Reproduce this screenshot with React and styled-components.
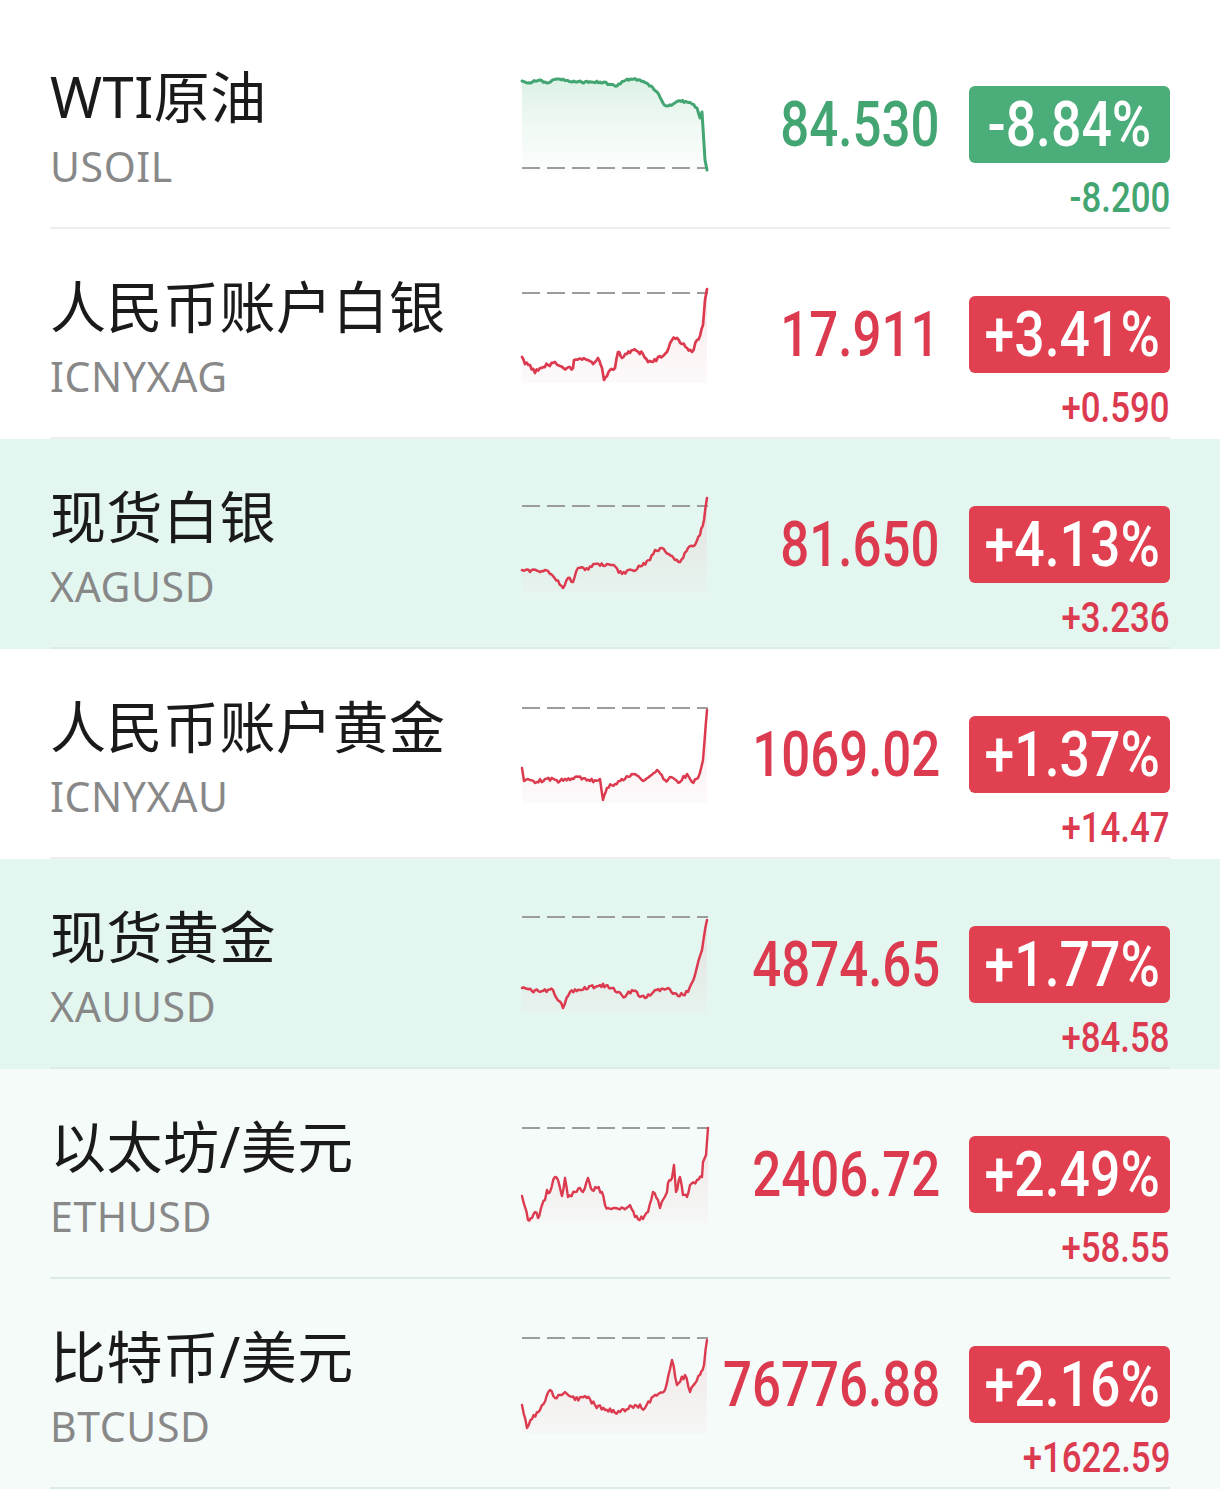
import React from 'react';
import styled, { createGlobalStyle } from 'styled-components';

const GlobalStyle = createGlobalStyle`
  html, body {
    margin: 0;
    padding: 0;
    background: #ffffff;
  }
  #root {
    min-height: 1497px;
  }
`;

const UP = '#dc3a4f';
const DOWN = '#43a572';
const UP_BADGE = '#e0404f';
const DOWN_BADGE = '#4aad7a';
const NUM_FONT = `Roboto, "Liberation Sans", sans-serif`;

const List = styled.div`
  padding: 19px 0 8px;
  background: #ffffff;
`;

const backgrounds = {
  white: '#ffffff',
  mint: '#e3f7f0',
  faint: '#f5fbf9',
};

const Row = styled.div`
  position: relative;
  height: 210px;
  box-sizing: border-box;
  padding: 0 50px;
  display: flex;
  background: ${p => backgrounds[p.$bg]};

  &::after {
    content: '';
    position: absolute;
    left: 50px;
    right: 50px;
    bottom: 0;
    height: 2px;
    background: ${p => (p.$bg === 'white' ? '#eeeeee' : '#dcebe5')};
  }
`;

const NameCol = styled.div`
  width: 470px;
  flex-shrink: 0;
  padding-top: 45px;
  display: flex;
  flex-direction: column;
  gap: 14px;
`;

const Name = styled.div`
  font-family: "Noto Sans", "Noto Sans CJK SC", sans-serif;
  font-size: 56px;
  letter-spacing: 0.5px;
  line-height: 64px;
  color: #1a1a1a;
  white-space: nowrap;
`;

const Code = styled.div`
  font-family: "Noto Sans", sans-serif;
  font-size: 41px;
  letter-spacing: 0.6px;
  line-height: 48px;
  color: #888888;
`;

const ChartBox = styled.div`
  width: 192px;
  flex-shrink: 0;
  padding-top: 50px;
`;

const Quote = styled.div`
  flex: 1;
  min-width: 0;
  padding-top: 67px;
  display: flex;
  flex-direction: column;
  align-items: flex-end;
  gap: 12px;
`;

const QuoteTop = styled.div`
  display: flex;
  align-items: center;
  gap: 29px;
`;

const Price = styled.div`
  font-family: ${NUM_FONT};
  font-weight: 500;
  font-size: 63px;
  line-height: 77px;
  color: ${p => (p.$up ? UP : DOWN)};
  white-space: nowrap;
`;

const Badge = styled.div`
  width: 201px;
  height: 77px;
  border-radius: 6px;
  background: ${p => (p.$up ? UP_BADGE : DOWN_BADGE)};
  color: #ffffff;
  font-family: ${NUM_FONT};
  font-weight: 500;
  font-size: 63px;
  line-height: 77px;
  text-align: center;
  white-space: nowrap;
  overflow: hidden;
`;

const Change = styled.div`
  font-family: ${NUM_FONT};
  font-weight: 500;
  font-size: 43px;
  line-height: 44px;
  color: ${p => (p.$up ? UP : DOWN)};
  white-space: nowrap;
`;

// the numerals in the reference are a condensed DIN face; squeeze Roboto to match
const Narrow = styled.span`
  display: inline-block;
  transform: scaleX(${p => p.$scale || 0.81});
  transform-origin: ${p => p.$origin || 'right'} center;
`;

function rng(seed) {
  let a = seed;
  return () => {
    a |= 0;
    a = (a + 0x6d2b79f5) | 0;
    let t = Math.imul(a ^ (a >>> 15), 1 | a);
    t = (t + Math.imul(t ^ (t >>> 7), 61 | t)) ^ t;
    return ((t ^ (t >>> 14)) >>> 0) / 4294967296;
  };
}

function linePoints(keys, seed, amp) {
  const rand = rng(seed);
  const pts = [];
  for (let i = 0; i < keys.length - 1; i++) {
    const [x1, y1] = keys[i];
    const [x2, y2] = keys[i + 1];
    const steps = Math.max(1, Math.round((x2 - x1) / 1.6));
    for (let s = 0; s < steps; s++) {
      const t = s / steps;
      const jitter = s === 0 ? 0 : (rand() - 0.5) * amp;
      pts.push([x1 + (x2 - x1) * t, y1 + (y2 - y1) * t + jitter]);
    }
  }
  pts.push(keys[keys.length - 1]);
  return pts;
}

const Sparkline = ({ keys, dash, up, seed, amp, width }) => {
  const pts = linePoints(keys, seed, amp);
  const d = pts.map((p, i) => `${i ? 'L' : 'M'}${p[0].toFixed(1)} ${p[1].toFixed(1)}`).join(' ');
  const first = pts[0];
  const last = pts[pts.length - 1];
  const fill = `${d} L${last[0]} 104 L${first[0]} 104 Z`;
  const color = up ? UP : DOWN;
  const id = `g${seed}`;
  return (
    <svg width="192" height="110" viewBox="0 0 192 110">
      <defs>
        <linearGradient id={id} x1="0" y1="0" x2="0" y2="1">
          <stop offset="0" stopColor={up ? '#e8b0b6' : '#bfe5cf'} stopOpacity={up ? 0.35 : 0.55} />
          <stop offset="1" stopColor={up ? '#f3dde0' : '#e6f5ec'} stopOpacity="0.15" />
        </linearGradient>
      </defs>
      <path d={fill} fill={`url(#${id})`} />
      <line x1="2" y1={dash} x2="188" y2={dash} stroke="#9c9c9c" strokeWidth="2" strokeDasharray="18 7" />
      <path d={d} fill="none" stroke={color} strokeWidth={width} strokeLinejoin="round" strokeLinecap="round" />
    </svg>
  );
};

const rows = [
  {
    name: 'WTI原油', code: 'USOIL', price: '84.530', pct: '-8.84%', chg: '-8.200', up: false, bg: 'white',
    dash: 99, amp: 2.2, width: 3,
    keys: [[2, 12], [8, 14], [20, 11], [27, 14], [37, 10], [57, 13], [80, 13], [97, 17], [107, 10], [120, 11], [128, 15], [137, 23], [143, 34], [147, 37], [153, 35], [158, 32], [167, 33], [172, 35], [177, 39], [180, 49], [182, 43], [185, 91], [187, 101]],
  },
  {
    name: '人民币账户白银', code: 'ICNYXAG', price: '17.911', pct: '+3.41%', chg: '+0.590', up: true, bg: 'white',
    dash: 14, amp: 4, width: 2.7,
    keys: [[2, 78], [5, 85], [10, 86], [15, 94], [20, 89], [28, 86], [35, 83], [40, 87], [47, 89], [53, 89], [54, 81], [67, 81], [73, 85], [78, 79], [82, 89], [84, 101], [87, 97], [90, 91], [95, 89], [98, 73], [102, 79], [107, 75], [113, 71], [123, 75], [128, 83], [133, 83], [143, 77], [147, 73], [152, 61], [157, 59], [167, 69], [172, 73], [177, 61], [180, 57], [183, 46], [185, 21], [187, 10]],
  },
  {
    name: '现货白银', code: 'XAGUSD', price: '81.650', pct: '+4.13%', chg: '+3.236', up: true, bg: 'mint',
    dash: 17, amp: 4, width: 2.5,
    keys: [[2, 81], [10, 83], [25, 81], [33, 87], [43, 99], [48, 89], [53, 93], [58, 79], [65, 81], [75, 75], [85, 77], [92, 76], [102, 85], [112, 81], [122, 77], [130, 71], [135, 61], [142, 59], [152, 67], [160, 73], [168, 59], [175, 56], [180, 46], [184, 31], [187, 9]],
  },
  {
    name: '人民币账户黄金', code: 'ICNYXAU', price: '1069.02', pct: '+1.37%', chg: '+14.47', up: true, bg: 'white',
    dash: 9, amp: 4, width: 2.5,
    keys: [[2, 69], [4, 82], [8, 80], [15, 84], [25, 80], [40, 82], [55, 78], [70, 82], [80, 80], [83, 101], [87, 89], [95, 85], [105, 80], [115, 75], [120, 79], [125, 81], [130, 77], [137, 71], [145, 81], [153, 79], [160, 83], [167, 75], [172, 83], [178, 79], [183, 61], [187, 11]],
  },
  {
    name: '现货黄金', code: 'XAUUSD', price: '4874.65', pct: '+1.77%', chg: '+84.58', up: true, bg: 'mint',
    dash: 8, amp: 4, width: 2.5,
    keys: [[2, 79], [20, 83], [33, 81], [43, 99], [50, 83], [60, 81], [80, 76], [92, 79], [105, 88], [112, 81], [125, 89], [135, 81], [148, 79], [158, 87], [168, 83], [175, 66], [182, 41], [187, 11]],
  },
  {
    name: '以太坊/美元', code: 'ETHUSD', price: '2406.72', pct: '+2.49%', chg: '+58.55', up: true, bg: 'faint',
    dash: 9, amp: 5, width: 2.4,
    keys: [[2, 77], [5, 88], [8, 101], [12, 99], [15, 93], [18, 99], [22, 86], [25, 81], [27, 71], [30, 73], [35, 58], [38, 61], [42, 77], [45, 59], [48, 78], [55, 73], [60, 69], [63, 73], [68, 59], [72, 71], [77, 69], [82, 73], [85, 86], [88, 89], [95, 89], [103, 89], [110, 86], [115, 98], [123, 100], [128, 93], [133, 73], [138, 81], [140, 89], [147, 73], [148, 64], [152, 59], [154, 46], [156, 73], [160, 58], [163, 76], [167, 78], [170, 66], [177, 61], [182, 58], [183, 43], [186, 36], [188, 9]],
  },
  {
    name: '比特币/美元', code: 'BTCUSD', price: '76776.88', pct: '+2.16%', chg: '+1622.59', up: true, bg: 'faint',
    dash: 9, amp: 5, width: 2.4,
    keys: [[2, 76], [7, 99], [12, 90], [20, 81], [30, 61], [35, 69], [45, 63], [55, 71], [65, 67], [75, 76], [85, 81], [100, 83], [115, 76], [125, 79], [135, 66], [145, 61], [150, 40], [152, 31], [157, 56], [165, 46], [170, 63], [180, 46], [184, 36], [187, 11]],
  },
];

const App = () => (
  <>
    <GlobalStyle />
    <List>
      {rows.map((r, i) => (
        <Row key={r.code} $bg={r.bg}>
          <NameCol>
            <Name>{r.name}</Name>
            <Code>{r.code}</Code>
          </NameCol>
          <ChartBox>
            <Sparkline keys={r.keys} dash={r.dash} up={r.up} seed={i + 11} amp={r.amp} width={r.width} />
          </ChartBox>
          <Quote>
            <QuoteTop>
              <Price $up={r.up}><Narrow>{r.price}</Narrow></Price>
              <Badge $up={r.up}><Narrow $origin="center" $scale={0.85}>{r.pct}</Narrow></Badge>
            </QuoteTop>
            <Change $up={r.up}><Narrow>{r.chg}</Narrow></Change>
          </Quote>
        </Row>
      ))}
    </List>
  </>
);

export default App;
